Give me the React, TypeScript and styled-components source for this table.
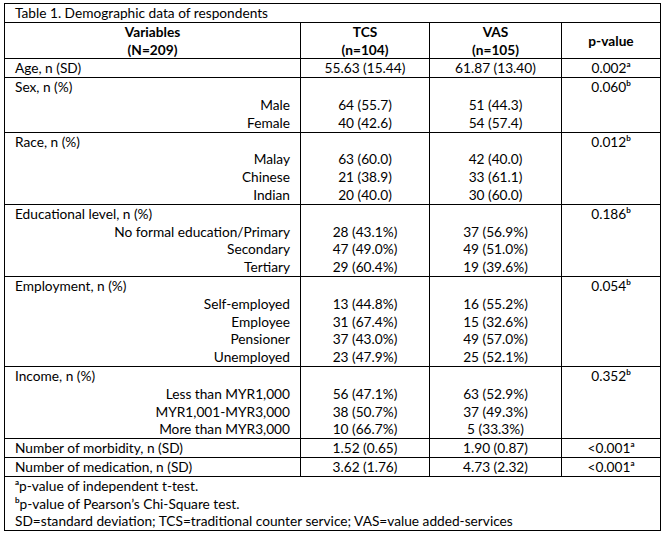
import styled, { createGlobalStyle } from "styled-components";

type Item = [string, string, string];

type Section = {
    label: string;
    p: string;
    sup: string;
    items: Item[];
};

type Single = {
    label: string;
    tcs: string;
    vas: string;
    p: string;
    sup: string;
};

const age: Single = { label: "Age, n (SD)", tcs: "55.63 (15.44)", vas: "61.87 (13.40)", p: "0.002", sup: "a" };

const sections: Section[] = [
    {
        label: "Sex, n (%)", p: "0.060", sup: "b",
        items: [
            ["Male", "64 (55.7)", "51 (44.3)"],
            ["Female", "40 (42.6)", "54 (57.4)"],
        ],
    },
    {
        label: "Race, n (%)", p: "0.012", sup: "b",
        items: [
            ["Malay", "63 (60.0)", "42 (40.0)"],
            ["Chinese", "21 (38.9)", "33 (61.1)"],
            ["Indian", "20 (40.0)", "30 (60.0)"],
        ],
    },
    {
        label: "Educational level, n (%)", p: "0.186", sup: "b",
        items: [
            ["No formal education/Primary", "28 (43.1%)", "37 (56.9%)"],
            ["Secondary", "47 (49.0%)", "49 (51.0%)"],
            ["Tertiary", "29 (60.4%)", "19 (39.6%)"],
        ],
    },
    {
        label: "Employment, n (%)", p: "0.054", sup: "b",
        items: [
            ["Self-employed", "13 (44.8%)", "16 (55.2%)"],
            ["Employee", "31 (67.4%)", "15 (32.6%)"],
            ["Pensioner", "37 (43.0%)", "49 (57.0%)"],
            ["Unemployed", "23 (47.9%)", "25 (52.1%)"],
        ],
    },
    {
        label: "Income, n (%)", p: "0.352", sup: "b",
        items: [
            ["Less than MYR1,000", "56 (47.1%)", "63 (52.9%)"],
            ["MYR1,001-MYR3,000", "38 (50.7%)", "37 (49.3%)"],
            ["More than MYR3,000", "10 (66.7%)", "5 (33.3%)"],
        ],
    },
];

const tail: Single[] = [
    { label: "Number of morbidity, n (SD)", tcs: "1.52 (0.65)", vas: "1.90 (0.87)", p: "<0.001", sup: "a" },
    { label: "Number of medication, n (SD)", tcs: "3.62 (1.76)", vas: "4.73 (2.32)", p: "<0.001", sup: "a" },
];

const SingleRow = ({ row }: { row: Single }) => (
    <tr>
        <Cell>{row.label}</Cell>
        <Cell $align="center">{row.tcs}</Cell>
        <Cell $align="center">{row.vas}</Cell>
        <Cell $align="center">
            {row.p}
            <Sup>{row.sup}</Sup>
        </Cell>
    </tr>
);

const SectionRow = ({ section }: { section: Section }) => (
    <tr>
        <Cell>
            <Line>{section.label}</Line>
            {section.items.map((it) => (
                <Line key={it[0]} $align="right">{it[0]}</Line>
            ))}
        </Cell>
        <Cell $align="center">
            <Line>&nbsp;</Line>
            {section.items.map((it) => (
                <Line key={it[0]}>{it[1]}</Line>
            ))}
        </Cell>
        <Cell $align="center">
            <Line>&nbsp;</Line>
            {section.items.map((it) => (
                <Line key={it[0]}>{it[2]}</Line>
            ))}
        </Cell>
        <Cell $align="center">
            <Line>
                {section.p}
                <Sup>{section.sup}</Sup>
            </Line>
        </Cell>
    </tr>
);

export default function App() {
    return (
        <>
            <GlobalStyle />
            <Wrapper>
                <Table>
                    <colgroup>
                        <col style={{ width: 296 }} />
                        <col style={{ width: 129 }} />
                        <col style={{ width: 132 }} />
                        <col style={{ width: 99 }} />
                    </colgroup>
                    <tbody>
                        <tr>
                            <Cell colSpan={4}>Table 1. Demographic data of respondents</Cell>
                        </tr>
                        <tr>
                            <HeadCell>Variables<br />(N=209)</HeadCell>
                            <HeadCell>TCS<br />(n=104)</HeadCell>
                            <HeadCell>VAS<br />(n=105)</HeadCell>
                            <HeadCell>p-value</HeadCell>
                        </tr>
                        <SingleRow row={age} />
                        {sections.map((s) => (
                            <SectionRow key={s.label} section={s} />
                        ))}
                        {tail.map((r) => (
                            <SingleRow key={r.label} row={r} />
                        ))}
                        <tr>
                            <Cell colSpan={4}>
                                <Line><Sup>a</Sup>p-value of independent t-test.</Line>
                                <Line><Sup>b</Sup>p-value of Pearson’s Chi-Square test.</Line>
                                <Line>SD=standard deviation; TCS=traditional counter service; VAS=value added-services</Line>
                            </Cell>
                        </tr>
                    </tbody>
                </Table>
            </Wrapper>
        </>
    );
}

const GlobalStyle = createGlobalStyle`
    html, body {
        margin: 0;
        padding: 0;
        background: #ffffff;
    }
`;

const Wrapper = styled.div`
    padding: 3px 0 0 4px;
    font-family: Lato, "Liberation Sans", sans-serif;
    font-size: 13.7px;
    color: #000;
`;

const Table = styled.table`
    border-collapse: collapse;
    table-layout: fixed;
    width: 657px;
`;

const Cell = styled.td<{ $align?: "left" | "center" | "right" }>`
    border: 1px solid #000;
    padding: 0 10px;
    line-height: 17.8px;
    vertical-align: top;
    text-align: ${({ $align }) => $align ?? "left"};
    white-space: nowrap;
`;

const HeadCell = styled.td`
    border: 1px solid #000;
    padding: 0 10px;
    line-height: 17.8px;
    vertical-align: middle;
    text-align: center;
    font-weight: 700;
`;

const Line = styled.div<{ $align?: "left" | "center" | "right" }>`
    height: 17.8px;
    text-align: ${({ $align }) => $align ?? "inherit"};
`;

const Sup = styled.sup`
    font-size: 8px;
    line-height: 0;
    vertical-align: super;
    font-weight: 700;
`;
